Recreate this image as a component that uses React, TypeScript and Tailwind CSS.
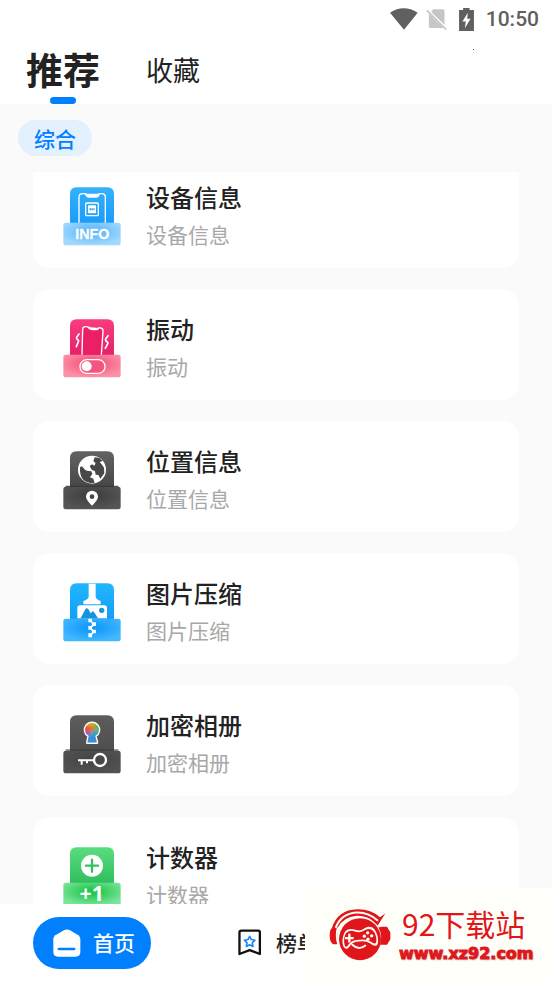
import type { ReactNode } from "react";

const base = "M47 143H205Q212 143 212 150V203Q212 211 204 211H48Q40 211 40 203V150Q40 143 47 143Z";
const tower = "M80 37H172Q192 37 192 57V150H60V57Q60 37 80 37Z";

type Tone = { id: string; top: string; bottom: string; edge: string; core: string };

function Badge({ tone, children }: { tone: Tone; children: ReactNode }) {
  return (
    <svg viewBox="39 36 174 177" className="h-[59px] w-[58px] shrink-0" aria-hidden="true">
      <defs>
        <linearGradient id={tone.id + "-t"} x1="0" y1="0" x2="0" y2="1">
          <stop offset="0" stopColor={tone.top} />
          <stop offset="1" stopColor={tone.bottom} />
        </linearGradient>
        <radialGradient id={tone.id + "-b"} cx="0.5" cy="0.4" r="0.6">
          <stop offset="0.2" stopColor={tone.core} />
          <stop offset="1" stopColor={tone.edge} />
        </radialGradient>
      </defs>
      <path d={tower} fill={`url(#${tone.id}-t)`} />
      <path d={base} fill={`url(#${tone.id}-b)`} />
      {children}
    </svg>
  );
}

const InfoIcon = () => (
  <Badge tone={{ id: "info", top: "#35b0fb", bottom: "#189cfa", core: "#5fb9fb", edge: "#a3d9fe" }}>
    <path d="M87 143V67Q87 56 98 56H106Q109 56 110 61Q111 66 117 66H138Q144 66 145 61Q146 56 149 56H155Q166 56 166 67V143" fill="none" stroke="#fff" strokeWidth="4" />
    <path d="M103 56H151L145 66H110Z" fill="#fff" />
    <rect x="107" y="84" width="38" height="38" rx="3" fill="none" stroke="#fff" strokeWidth="4" />
    <rect x="114" y="91" width="24" height="24" rx="2" fill="#fff" />
    <path d="M118 103H134" stroke="#47a9ef" strokeWidth="6" strokeDasharray="5 1" />
    <text x="128" y="193" textAnchor="middle" fontFamily="'Liberation Sans', sans-serif" fontWeight="700" fontSize="43" fill="#3c96dc" stroke="#3c96dc" opacity="0.4">INFO</text>
    <text x="127" y="192" textAnchor="middle" fontFamily="'Liberation Sans', sans-serif" fontWeight="700" fontSize="43" fill="#fff" stroke="#fff">INFO</text>
  </Badge>
);

const VibrateIcon = () => (
  <Badge tone={{ id: "vib", top: "#fb3c80", bottom: "#e3206a", core: "#f5557c", edge: "#fb92a8" }}>
    <path d="M96 143L98 67Q99 59 107 59L116 61Q119 67 126 68L138 68Q144 68 147 62L152 63Q160 64 159 73L154 143Z" fill="#ea1f66" />
    <path d="M96 143L98 67Q99 58 108 59L116 60Q119 67 126 68L138 68Q144 68 147 62L152 63Q160 64 159 73L154 143" fill="none" stroke="#fff" strokeWidth="4" />
    <path d="M112 60L117 67L143 70L148 63Z" fill="#fff" />
    <path d="M87 81L80 91Q78 95 83 98Q88 101 84 106L79 119M174 86L167 96Q165 101 171 104Q176 107 172 112L166 124" fill="none" stroke="#fff" strokeWidth="5" strokeLinecap="round" />
    <rect x="90" y="158" width="75" height="41" rx="20" fill="#f4557d" stroke="#fff" strokeWidth="4" />
    <circle cx="110" cy="178" r="15" fill="#fff" />
  </Badge>
);

const LocationIcon = () => (
  <Badge tone={{ id: "loc", top: "#626262", bottom: "#454545", core: "#414141", edge: "#555555" }}>
    <path d="M47 142H205" stroke="#373737" strokeWidth="3" />
    <circle cx="126" cy="92" r="42" fill="#fff" />
    <path d="M90 84L98 82L103 91L110 95L124 97L127 105L120 115L130 119L134 131Q116 136 101 124Q88 110 90 84ZM134 55L148 57L158 66L149 69L156 77L162 86L163 103L151 119L145 108L137 107L135 97L125 92L119 81L126 76L133 80L137 73L130 66Z" fill="#484848" />
    <path d="M109 76L121 61L128 56L119 53Q100 58 94 74L98 85L106 88L116 83L119 77Z" fill="#fff" />
    <path d="M126 200Q108 182 108 173A18 18 0 0 1 144 173Q144 182 126 200Z" fill="#fff" />
    <circle cx="126" cy="173" r="7" fill="#454545" />
  </Badge>
);

const CompressIcon = () => (
  <Badge tone={{ id: "zip", top: "#21b7fd", bottom: "#129cfb", core: "#159bfc", edge: "#43b8fd" }}>
    <path d="M116 38H137V77Q139 86 152 90V100H100V90Q114 86 116 77Z" fill="#fff" />
    <path d="M90 103H163Q171 103 171 111V142H82V111Q82 103 90 103Z" fill="#fff" />
    <path d="M92 142L106 115Q110 108 115 115L122 127L128 121L132 123L144 142Z" fill="#1593dc" />
    <circle cx="155" cy="118" r="8" fill="#1593dc" />
    <path d="M115 143H126V154H115ZM126 154H138V165H126ZM115 165H126V176H115ZM126 176H138V187H126ZM115 187H126V199H115Z" fill="#fff" />
    <path d="M124 152H129V157H124ZM124 163H129V168H124ZM124 174H129V179H124ZM124 185H129V190H124Z" fill="#fff" />
  </Badge>
);

const AlbumIcon = () => (
  <Badge tone={{ id: "album", top: "#5d5d5d", bottom: "#4d4d4d", core: "#474747", edge: "#515151" }}>
    <defs>
      <clipPath id="keyhole">
        <path d="M112 119L116 99A21 21 0 1 1 136 99L141 119Z" />
      </clipPath>
      <filter id="melt" x="-20%" y="-20%" width="140%" height="140%">
        <feGaussianBlur stdDeviation="3" />
      </filter>
    </defs>
    <path d="M47 141H205" stroke="#3b3b3b" strokeWidth="3" />
    <path d="M112 119L116 99A21 21 0 1 1 136 99L141 119Z" fill="#fff" stroke="#fff" strokeWidth="8" strokeLinejoin="round" />
    <g clipPath="url(#keyhole)">
      <g filter="url(#melt)">
        <rect x="100" y="50" width="26" height="24" fill="#f1a32a" />
        <rect x="124" y="50" width="26" height="24" fill="#a7b93c" />
        <rect x="100" y="68" width="20" height="18" fill="#ee5132" />
        <rect x="134" y="66" width="20" height="16" fill="#58b95b" />
        <rect x="118" y="70" width="18" height="16" fill="#e47532" />
        <rect x="100" y="84" width="24" height="14" fill="#a75bab" />
        <rect x="124" y="82" width="28" height="16" fill="#3fa5a6" />
        <rect x="105" y="96" width="45" height="30" fill="#3b8ed8" />
      </g>
    </g>
    <circle cx="150" cy="171" r="18" fill="none" stroke="#fff" strokeWidth="7" />
    <path d="M132 172H84M95 172V185M111 172V181" fill="none" stroke="#fff" strokeWidth="6" />
  </Badge>
);

const CounterIcon = () => (
  <Badge tone={{ id: "count", top: "#59dc80", bottom: "#2ebd5d", core: "#25c84f", edge: "#7be49c" }}>
    <circle cx="126" cy="92" r="33" fill="#fff" />
    <path d="M126 74V110M108 92H144" stroke="#35c062" strokeWidth="7" strokeLinecap="round" />
    <text x="125" y="197" textAnchor="middle" fontFamily="'Noto Sans', sans-serif" fontWeight="700" fontSize="64" fill="#fff">+1</text>
  </Badge>
);

const tools = [
  { name: "设备信息", Icon: InfoIcon },
  { name: "振动", Icon: VibrateIcon },
  { name: "位置信息", Icon: LocationIcon },
  { name: "图片压缩", Icon: CompressIcon },
  { name: "加密相册", Icon: AlbumIcon },
  { name: "计数器", Icon: CounterIcon },
];

function StatusBar() {
  return (
    <div className="flex h-[38px] items-center justify-end gap-3 pr-[13px] text-[#606060]">
      <svg viewBox="0 0 82 66" preserveAspectRatio="none" className="-mr-1 h-[22px] w-7" aria-hidden="true">
        <path d="M0 14Q40-12 81 14L41 65Z" fill="currentColor" />
      </svg>
      <svg viewBox="0 0 60 66" className="h-[22px] w-[21px]" aria-hidden="true">
        <path d="M20 4H49Q54 4 54 9V50L14 12ZM7 17L50 60H12Q7 60 7 55Z" fill="#c6c6c6" />
        <path d="M1 7L59 65" stroke="#c6c6c6" strokeWidth="5" />
      </svg>
      <svg viewBox="0 0 44 68" className="h-[23px] w-[15px]" aria-hidden="true">
        <path d="M12 0H31V6H44V68H0V6H12Z" fill="currentColor" />
        <path d="M26 14L10 40H20L17 60L34 32H24Z" fill="#fff" />
      </svg>
      <span className="font-[Roboto,sans-serif] text-[21px] font-medium leading-6">10:50</span>
    </div>
  );
}

function SiteMark() {
  return (
    <a href="#site" className="absolute bottom-0 right-0 flex h-[93px] w-[247px] items-center bg-[#fffffa] pl-6 text-[#e0161b]">
      <svg viewBox="100 94 186 158" className="h-[53px] w-[62px] shrink-0" aria-hidden="true">
        <path d="M108 155Q125 98 185 97Q225 96 253 121L269 110L246 146L236 136Q214 116 183 117Q142 121 126 153L124 202H112Q102 195 102 177Q102 158 108 155Z" fill="currentColor" />
        <path d="M120 153Q137 108 186 107Q220 107 247 132" fill="none" stroke="#fffffa" strokeWidth="6" />
        <circle cx="193" cy="187" r="63" fill="currentColor" />
        <path d="M258 150H274L284 166V187L274 204H253Q262 176 248 152Z" fill="currentColor" />
        <path d="M126 153Q119 179 128 204" fill="none" stroke="#fffffa" strokeWidth="5" />
        <path d="M147 166Q158 151 179 159Q193 165 207 154Q228 143 240 163Q251 185 246 202Q239 212 224 200Q211 191 190 194Q169 194 160 211Q151 222 143 208Q136 189 147 166Z" fill="#fffffa" />
        <path d="M150 170Q160 158 178 164Q194 170 210 159Q226 151 236 166Q245 184 241 198Q236 203 226 195Q211 186 190 189Q166 189 156 207Q151 213 147 205Q142 188 150 170Z" fill="currentColor" />
        <path d="M161 171V197M148 184H174" stroke="#fffffa" strokeWidth="7" />
        <g fill="#fffffa">
          <circle cx="216" cy="168" r="5" />
          <circle cx="206" cy="178" r="5" />
          <circle cx="228" cy="177" r="5" />
          <circle cx="217" cy="187" r="5" />
        </g>
        <path d="M170 204Q189 222 209 206" fill="none" stroke="#fffffa" strokeWidth="6" strokeLinecap="round" />
      </svg>
      <span className="ml-2 flex flex-col">
        <span className="pl-[3px] text-[30px] leading-[34px]">92下载站</span>
        <span className="pt-1 font-['DejaVu_Sans',sans-serif] text-base font-bold leading-5 [-webkit-text-stroke:1px_#e0161b] [text-shadow:1px_1px_2px_#bbb]">www.xz92.com</span>
      </span>
    </a>
  );
}

export default function App() {
  return (
    <div className="relative flex h-screen flex-col overflow-hidden bg-[#fafafa] font-['Noto_Sans_CJK_SC',sans-serif] text-[#222]">
      <header className="relative bg-white">
        <StatusBar />
        <span className="absolute right-[78px] top-[49px] size-px bg-[#444]" />
        <nav className="flex h-[66px] items-start pl-[26px]">
          <button className="flex flex-col items-center">
            <span className="-mb-1 text-[37px] font-bold leading-[63px]">推荐</span>
            <span className="h-[7px] w-[26px] rounded-full bg-[#0080ff]" />
          </button>
          <button className="ml-[46px] text-[27px] leading-[64px]">收藏</button>
        </nav>
      </header>
      <div className="px-[18px] py-4">
        <button className="block h-9 rounded-full bg-[#e3f0fe] px-4 text-[21px] font-medium leading-[34px] text-[#0080ff]">综合</button>
      </div>
      <main className="min-h-0 flex-1 overflow-hidden px-[33px]">
        <ul className="-mt-[15px] flex flex-col gap-[21px]">
          {tools.map(({ name, Icon }) => (
            <li key={name}>
              <button className="flex w-full items-center gap-[25px] rounded-2xl bg-white pb-[15px] pl-[30px] pt-[22px] text-left">
                <Icon />
                <span className="flex flex-col">
                  <span className="text-2xl font-medium leading-9">{name}</span>
                  <span className="text-[21px] leading-[38px] text-[#a8a8a8]">{name}</span>
                </span>
              </button>
            </li>
          ))}
        </ul>
      </main>
      <nav className="flex h-[77px] items-center bg-white px-[33px]">
        <button className="flex h-[52px] items-center gap-3 rounded-full bg-[#0080ff] pl-5 pr-4 text-[21px] font-medium text-white">
          <svg viewBox="158 142 84 84" className="size-7" aria-hidden="true">
            <path d="M191 146Q200 141 209 146L234 161Q240 165 240 173V211Q240 225 226 225H173Q159 225 159 211V173Q159 165 165 161Z" fill="#fff" />
            <path d="M175 202H222" stroke="#0080ff" strokeWidth="7" strokeLinecap="round" />
          </svg>
          首页
        </button>
        <button className="ml-[87px] flex items-center gap-3.5 text-[21px] font-medium">
          <svg viewBox="716 148 72 82" className="h-[27px] w-6" aria-hidden="true">
            <path d="M726 153H777Q782 153 782 158V224L751 212L720 224V158Q720 153 726 153Z" fill="none" stroke="#111" strokeWidth="7" strokeLinejoin="round" />
            <path d="M751 170L756 180L767 182L759 190L761 201L751 196L741 201L743 190L735 182L746 180Z" fill="none" stroke="#1688f5" strokeWidth="5" strokeLinejoin="round" />
          </svg>
          榜单
        </button>
      </nav>
      <SiteMark />
    </div>
  );
}
